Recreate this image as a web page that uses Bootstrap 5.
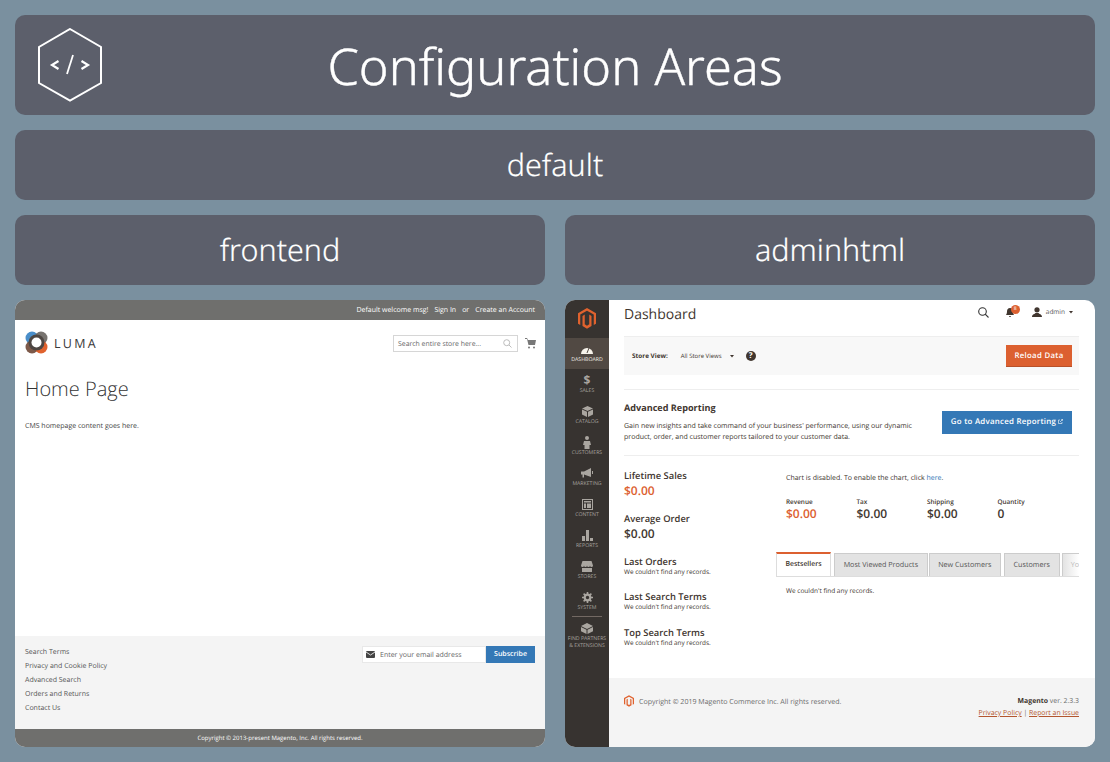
<!doctype html>
<html lang="en">
  <head>
    <meta charset="UTF-8">
    <meta name="viewport" content="width=device-width, initial-scale=1.0">
    <title>Configuration Areas</title>
    <link href="https://cdn.jsdelivr.net/npm/bootstrap@5.3.0/dist/css/bootstrap.min.css" rel="stylesheet">
    <style>
      body {
        background: #7a909f;
        font-family: "Open Sans", sans-serif;
        color: #41362f;
        height: 762px;
        overflow: hidden;
        text-rendering: geometricPrecision;
      }
      .page-wrap { padding: 15px; width: 1110px; }
      .slate-box {
        background: #5c5f6b;
        color: #fff;
        border-radius: 10px;
        font-family: "Noto Sans", sans-serif;
        font-weight: 300;
      }
      .title-box { height: 100px; font-size: 50.5px; margin-bottom: 15px; padding-top: 2px; -webkit-text-stroke: .4px #fff; }
      .title-box svg { position: absolute; left: 23px; top: 13px; }
      .area-box { height: 70px; font-size: 30.5px; margin-bottom: 15px; -webkit-text-stroke: .15px #fff; }
      .split-row { gap: 20px; }
      .split-row > div { width: 530px; }
      .shot { height: 447px; border-radius: 10px; overflow: hidden; background: #fff; }

      /* luma storefront */
      .luma-top { height: 20px; background: #6f6f6d; color: #fff; font-size: 7px; gap: 6px; padding: 2px 10px 0 0; }
      .luma-head { padding: 11px 9px 0 10px; height: 44px; }
      .luma-brand { font-size: 12.5px; letter-spacing: 2.3px; color: #3a3a3a; font-weight: 500; margin-left: -2px; }
      .luma-search { width: 125px; height: 17px; border: 1px solid #d6d6d6; font-size: 6.9px; color: #666; padding: 0 5px 0 4px; }
      .luma-search span { padding-top: 3px; }
      .cart-ico { margin: 2px 0 0 -1px; }
      .luma-body { padding: 0 10px; height: 272px; }
      .luma-body h1 { font-size: 20px; font-weight: 300; margin: 14px 0 21px; color: #333; line-height: 22px; }
      .luma-body p { font-size: 7px; margin: 0; color: #444; line-height: 12px; }
      .luma-foot { height: 93px; background: #f4f4f4; padding: 10px 10px 0; font-size: 7px; color: #555; }
      .luma-links div { height: 14px; line-height: 14px; }
      .sub-form { height: 17px; }
      .sub-field { width: 124px; background: #fff; border: 1px solid #e8e8e8; color: #666; padding-left: 3px; gap: 5px; }
      .sub-field span { padding-top: 3px; }
      .sub-btn { width: 49px; background: #3478b6; color: #fff; font-weight: 600; padding-top: 2px; }
      .luma-copy { height: 18px; background: #6f6f6d; color: #fff; font-size: 6px; padding-top: 1px; }

      /* admin */
      .admin-side { width: 44px; background: #373330; color: #aaa6a0; font-size: 5.2px; text-transform: uppercase; text-align: center; line-height: 7px; flex-shrink: 0; }
      .side-logo { height: 38px; padding-bottom: 2px; }
      .side-item { height: 31px; padding-top: 4px; }
      .side-icon { height: 14px; }
      .side-dollar { font-size: 12px; font-weight: 700; line-height: 14px; }
      .side-item.is-on { background: #514943; color: #f7f3eb; height: 31px; }
      .side-rule { border-top: 1px solid #736963; margin: -1px 7px 0; }
      .admin-main { width: 486px; }
      .admin-inner { padding: 0 16px 0 15px; height: 378px; }
      .admin-bar { height: 36px; padding: 0 6px 6px 0; }
      .admin-bar h2 { font-size: 14px; font-weight: 400; margin: 0; color: #41362f; }
      .admin-tools { font-size: 6.5px; color: #555; margin-bottom: 6px; }
      .bell-wrap { margin-left: 17px; }
      .user-ico { margin-left: 18px; }
      .bell-badge { position: absolute; top: -3px; right: -6px; width: 9px; height: 9px; border-radius: 50%; background: #dc6030; color: #fff; font-size: 5px; line-height: 9px; text-align: center; }
      .store-bar { height: 39px; background: #f8f8f8; border-top: 1px solid #eee; padding: 0 7px 0 8px; font-size: 6.4px; }
      .store-pick { font-size: 6px; margin-left: 13px; }
      .help-dot { width: 10px; height: 10px; border-radius: 50%; background: #41362f; color: #fff; font-size: 8px; font-weight: 700; line-height: 10px; text-align: center; margin-left: 12px; }
      .reload-btn { width: 66px; height: 22px; background: #dc6030; color: #fff; font-size: 7.8px; font-weight: 600; letter-spacing: .3px; border-bottom: 1px solid #b8512a; padding-top: 2px; }
      .report-row { height: 67px; margin-top: 14px; border-top: 1px solid #eee; border-bottom: 1px solid #eee; padding-right: 7px; }
      .report-row h3 { font-size: 9.1px; font-weight: 700; margin: 0 0 7px; color: #41362f; line-height: 12px; }
      .report-row p { font-size: 7.03px; line-height: 11.5px; margin: 0; width: 300px; color: #41362f; }
      .report-btn { width: 130px; height: 23px; background: #3478b6; color: #fff; font-size: 7.9px; font-weight: 600; letter-spacing: .25px; gap: 2px; padding-top: 1px; }
      .stats-col { width: 152px; padding-top: 14px; }
      .stat-label { font-size: 9.4px; font-weight: 600; line-height: 12px; color: #41362f; }
      .stat-val { font-size: 12px; font-weight: 600; line-height: 16px; color: #41362f; padding-top: 1px; height: 16px; }
      .is-hot { color: #dc6030 !important; }
      .stat-note { font-size: 6.4px; line-height: 8px; color: #41362f; }
      .gap-15 { margin-top: 15px; }
      .gap-16 { margin-top: 16px; }
      .chart-col { width: 303px; padding-top: 17px; }
      .chart-msg { font-size: 7px; line-height: 12px; padding-left: 10px; margin: 0; }
      .here-link { color: #3478b6; }
      .totals { padding: 12px 0 0 10px; height: 67px; }
      .totals > div { width: 70.5px; }
      .totals .tot-k { font-size: 6.4px; font-weight: 600; line-height: 9px; }
      .totals .tot-v { font-size: 12px; font-weight: 600; line-height: 16px; }
      .tab-row { height: 25px; border-bottom: 1px solid #ddd; gap: 2px; overflow: hidden; font-size: 7.2px; }
      .tab-cell { background: #e3e3e3; border: 1px solid #ccc; border-bottom: 0; margin-top: 1px; color: #555; }
      .tab-cell.is-on { background: #fff; border-top: 2px solid #dc6030; border-left: 1px solid #ddd; border-right: 1px solid #ddd; margin-top: 0; width: 55px; color: #41362f; font-weight: 600; font-size: 6.9px; }
      .tab-cell.is-fade { background: linear-gradient(to right, #e3e3e3, #fff); border-right: 0; color: #bbb; flex: 1; padding-left: 8px; }
      .tab-w1 { width: 94px; margin-left: 1px; }
      .tab-w2 { width: 72px; margin-left: -1px; }
      .tab-w3 { width: 56px; margin-left: 1px; }
      .tab-note { font-size: 6.5px; padding: 9px 0 0 10px; line-height: 9px; margin: 0; }
      .admin-foot { height: 69px; background: #f4f4f4; padding: 18px 16px 0 15px; font-size: 6.9px; color: #6a6a6a; line-height: 12px; }
      .admin-foot a { color: #b3562f; }
      .admin-foot b { color: #41362f; }
      .foot-logo { margin-top: -1px; margin-right: 1px; }
      .foot-copy { font-size: 7.05px; }
    </style>
  </head>
  <body>
    <div class="page-wrap">
      <div class="slate-box title-box position-relative d-flex align-items-center justify-content-center">
        <svg width="66" height="74" viewBox="0 0 66 74" fill="none" stroke="#fff">
          <polygon points="32,1 63,19 63,55 32,72.5 1,55 1,19" stroke-width="2"/>
          <polyline points="20.5,33 14,37 20.5,41" stroke-width="2.2"/>
          <line x1="35" y1="27" x2="29" y2="46" stroke-width="1.8"/>
          <polyline points="43.5,33 50,37 43.5,41" stroke-width="2.2"/>
        </svg>
        Configuration Areas
      </div>
      <div class="slate-box area-box d-flex align-items-center justify-content-center">default</div>
      <div class="d-flex split-row">
        <div class="slate-box area-box d-flex align-items-center justify-content-center">frontend</div>
        <div class="slate-box area-box d-flex align-items-center justify-content-center">adminhtml</div>
      </div>
      <div class="d-flex split-row">

        <!-- Luma -->
        <div class="shot d-flex flex-column">
          <div class="luma-top d-flex align-items-center justify-content-end">
            <span>Default welcome msg!</span><span>Sign In</span><span>or</span><span>Create an Account</span>
          </div>
          <div class="luma-head d-flex justify-content-between">
            <div class="d-flex align-items-start gap-2">
              <svg width="23" height="23" viewBox="0 0 23 23">
                <circle cx="7" cy="7" r="6.5" fill="#4a8ec9"/>
                <circle cx="16" cy="7" r="6.5" fill="#77736f"/>
                <circle cx="7" cy="16" r="6.5" fill="#7d5a4a"/>
                <circle cx="16" cy="16" r="6.5" fill="#e0622e"/>
                <circle cx="11.5" cy="11.5" r="8" fill="#4d4642"/>
                <circle cx="11.5" cy="11.5" r="5" fill="#fff"/>
              </svg>
              <span class="luma-brand mt-1">LUMA</span>
            </div>
            <div class="d-flex align-items-start gap-2 pt-1">
              <div class="luma-search d-flex align-items-center justify-content-between">
                <span>Search entire store here...</span>
                <svg width="9" height="9" viewBox="0 0 9 9" fill="none" stroke="#bbb"><circle cx="3.7" cy="3.7" r="3"/><line x1="6" y1="6" x2="8.5" y2="8.5"/></svg>
              </div>
              <svg class="cart-ico" width="11" height="12" viewBox="0 0 11 12" fill="#777"><path d="M0 1h2l1 2h8l-1 5H3.500L2 2H0z"/><circle cx="4" cy="10.500" r="1"/><circle cx="9" cy="10.500" r="1"/></svg>
            </div>
          </div>
          <div class="luma-body">
            <h1>Home Page</h1>
            <p>CMS homepage content goes here.</p>
          </div>
          <div class="luma-foot d-flex justify-content-between">
            <div class="luma-links">
              <div>Search Terms</div>
              <div>Privacy and Cookie Policy</div>
              <div>Advanced Search</div>
              <div>Orders and Returns</div>
              <div>Contact Us</div>
            </div>
            <div class="sub-form d-flex">
              <div class="sub-field d-flex align-items-center">
                <svg width="9" height="7" viewBox="0 0 9 7"><rect width="9" height="7" rx="1" fill="#444"/><path d="M0 1l4.500 3L9 1" fill="none" stroke="#fff" stroke-width=".8"/></svg>
                <span>Enter your email address</span>
              </div>
              <div class="sub-btn d-flex align-items-center justify-content-center">Subscribe</div>
            </div>
          </div>
          <div class="luma-copy d-flex align-items-center justify-content-center">Copyright © 2013-present Magento, Inc. All rights reserved.</div>
        </div>

        <!-- Admin -->
        <div class="shot d-flex">
          <div class="admin-side">
            <div class="side-logo d-flex align-items-center justify-content-center">
              <svg width="18" height="21" viewBox="0 0 24 28" fill="#e0622e"><path d="M12 0l12 7v14l-3 1.700V8.700L12 3.500 3 8.700v14L0 21V7z"/><path d="M6 10.500l3-1.700v13l3 1.700 3-1.700v-13l3 1.700V24l-6 3.500L6 24z"/></svg>
            </div>
            <div class="side-item is-on">
              <div class="side-icon d-flex align-items-center justify-content-center"><svg width="12" height="9" viewBox="0 0 12 9" fill="#f7f3eb"><path d="M0 9a6 6 0 1 1 12 0z"/><line x1="6" y1="8" x2="8" y2="3" stroke="#514943"/></svg></div>
              Dashboard
            </div>
            <div class="side-item">
              <div class="side-icon side-dollar">$</div>
              Sales
            </div>
            <div class="side-item">
              <div class="side-icon d-flex align-items-center justify-content-center"><svg width="11" height="11" viewBox="0 0 11 11" fill="#aaa6a0"><path d="M5.500 0L11 2.500 5.500 5 0 2.500zM0 3.500l5 2.300V11L0 8.500zM11 3.500L6 5.800V11l5-2.500z"/></svg></div>
              Catalog
            </div>
            <div class="side-item">
              <div class="side-icon d-flex align-items-center justify-content-center"><svg width="8" height="13" viewBox="0 0 8 13" fill="#aaa6a0"><circle cx="4" cy="2" r="2"/><path d="M1 5h6l1 4H6.500v4h-5V9H0z"/></svg></div>
              Customers
            </div>
            <div class="side-item">
              <div class="side-icon d-flex align-items-center justify-content-center"><svg width="12" height="10" viewBox="0 0 12 10" fill="#aaa6a0"><path d="M0 3.500h3L10 0v9L3 6.500v3H1.500v-3H0zM11 3h1v3h-1z"/></svg></div>
              Marketing
            </div>
            <div class="side-item">
              <div class="side-icon d-flex align-items-center justify-content-center"><svg width="11" height="11" viewBox="0 0 11 11" fill="#aaa6a0"><path d="M0 0h11v11H0zM1 1v9h9V1zM2 2h7v1.500H2zM2 4.500h2V9H2zM5 4.500h4V9H5z" fill-rule="evenodd"/></svg></div>
              Content
            </div>
            <div class="side-item">
              <div class="side-icon d-flex align-items-center justify-content-center"><svg width="11" height="11" viewBox="0 0 11 11" fill="#aaa6a0"><path d="M0 6h3v5H0zM4 0h3v11H4zM8 8h3v3H8z"/></svg></div>
              Reports
            </div>
            <div class="side-item">
              <div class="side-icon d-flex align-items-center justify-content-center"><svg width="12" height="11" viewBox="0 0 12 11" fill="#aaa6a0"><path d="M1.500 0h9L12 4.500a1.500 1.500 0 0 1-3 0 1.500 1.500 0 0 1-3 0 1.500 1.500 0 0 1-3 0 1.500 1.500 0 0 1-3 0zM1 7h10v4H1z"/></svg></div>
              Stores
            </div>
            <div class="side-item">
              <div class="side-icon d-flex align-items-center justify-content-center"><svg width="11" height="11" viewBox="0 0 11 11" fill="none" stroke="#aaa6a0"><circle cx="5.500" cy="5.500" r="2.800" stroke-width="2.200"/><path d="M5.500 0v2M5.500 9v2M0 5.500h2M9 5.500h2M1.600 1.600l1.400 1.400M8 8l1.400 1.400M1.600 9.400L3 8M8 3l1.400-1.400" stroke-width="1.600"/></svg></div>
              System
            </div>
            <div class="side-rule"></div>
            <div class="side-item">
              <div class="side-icon d-flex align-items-center justify-content-center"><svg width="12" height="11" viewBox="0 0 12 11" fill="#aaa6a0"><path d="M6 0l6 3-6 3-6-3zM0 4l5.500 2.700V11L0 8.300zM12 4L6.500 6.700V11L12 8.300z"/></svg></div>
              Find Partners<br>&amp; Extensions
            </div>
          </div>
          <div class="admin-main d-flex flex-column">
            <div class="admin-inner">
              <div class="admin-bar d-flex align-items-center justify-content-between">
                <h2>Dashboard</h2>
                <div class="admin-tools d-flex align-items-center">
                  <svg width="11" height="11" viewBox="0 0 11 11" fill="none" stroke="#333" stroke-width="1.100"><circle cx="4.500" cy="4.500" r="3.800"/><line x1="7.200" y1="7.200" x2="10.500" y2="10.500"/></svg>
                  <span class="bell-wrap position-relative d-inline-flex">
                    <svg width="8" height="9" viewBox="0 0 8 9" fill="#41362f"><path d="M4 0c2 0 3 1.500 3 3.500S8 7 8 7H0s1-1.500 1-3.500S2 0 4 0zM3 8h2a1 1 0 0 1-2 0z"/></svg>
                    <span class="bell-badge">8</span>
                  </span>
                  <svg class="user-ico" width="10" height="10" viewBox="0 0 10 10" fill="#41362f"><circle cx="5" cy="2.800" r="2.600"/><path d="M0 10c0-3 3-3 3.500-4h3C7 7 10 7 10 10z"/></svg>
                  <span class="ms-1">admin</span>
                  <svg class="ms-1" width="4" height="3" viewBox="0 0 4 3" fill="#41362f"><path d="M0 0h4L2 2.500z"/></svg>
                </div>
              </div>
              <div class="store-bar d-flex align-items-center">
                <b>Store View:</b>
                <span class="store-pick">All Store Views</span>
                <svg class="ms-2" width="4" height="3" viewBox="0 0 4 3" fill="#41362f"><path d="M0 0h4L2 2.500z"/></svg>
                <span class="help-dot">?</span>
                <div class="reload-btn d-flex align-items-center justify-content-center ms-auto">Reload Data</div>
              </div>
              <div class="report-row d-flex align-items-center justify-content-between">
                <div>
                  <h3>Advanced Reporting</h3>
                  <p>Gain new insights and take command of your business' performance, using our dynamic product, order, and customer reports tailored to your customer data.</p>
                </div>
                <div class="report-btn d-flex align-items-center justify-content-center">
                  Go to Advanced Reporting
                  <svg class="mb-1" width="5" height="5" viewBox="0 0 5 5" fill="none" stroke="#fff" stroke-width=".6"><path d="M2 1H.500v3.500H4V3M2 3l2.500-2.500M3 .300h1.700V2"/></svg>
                </div>
              </div>
              <div class="d-flex">
                <div class="stats-col">
                  <div class="stat-label">Lifetime Sales</div>
                  <div class="stat-val is-hot">$0.00</div>
                  <div class="stat-label gap-15">Average Order</div>
                  <div class="stat-val">$0.00</div>
                  <div class="stat-label gap-15">Last Orders</div>
                  <div class="stat-note">We couldn't find any records.</div>
                  <div class="stat-label gap-15">Last Search Terms</div>
                  <div class="stat-note">We couldn't find any records.</div>
                  <div class="stat-label gap-16">Top Search Terms</div>
                  <div class="stat-note">We couldn't find any records.</div>
                </div>
                <div class="chart-col">
                  <p class="chart-msg">Chart is disabled. To enable the chart, click <span class="here-link">here</span>.</p>
                  <div class="totals d-flex">
                    <div><div class="tot-k">Revenue</div><div class="tot-v is-hot">$0.00</div></div>
                    <div><div class="tot-k">Tax</div><div class="tot-v">$0.00</div></div>
                    <div><div class="tot-k">Shipping</div><div class="tot-v">$0.00</div></div>
                    <div><div class="tot-k">Quantity</div><div class="tot-v">0</div></div>
                  </div>
                  <div class="tab-row d-flex">
                    <div class="tab-cell is-on d-flex align-items-center justify-content-center">Bestsellers</div>
                    <div class="tab-cell tab-w1 d-flex align-items-center justify-content-center">Most Viewed Products</div>
                    <div class="tab-cell tab-w2 d-flex align-items-center justify-content-center">New Customers</div>
                    <div class="tab-cell tab-w3 d-flex align-items-center justify-content-center">Customers</div>
                    <div class="tab-cell is-fade d-flex align-items-center">Yo</div>
                  </div>
                  <p class="tab-note">We couldn't find any records.</p>
                </div>
              </div>
            </div>
            <div class="admin-foot d-flex justify-content-between">
              <div class="d-flex align-items-start gap-1">
                <svg class="foot-logo" width="10" height="12" viewBox="0 0 24 28" fill="#e0622e"><path d="M12 0l12 7v14l-3 1.700V8.700L12 3.500 3 8.700v14L0 21V7z"/><path d="M6 10.500l3-1.700v13l3 1.700 3-1.700v-13l3 1.700V24l-6 3.500L6 24z"/></svg>
                <span class="foot-copy">Copyright © 2019 Magento Commerce Inc. All rights reserved.</span>
              </div>
              <div class="text-end">
                <div><b>Magento</b> ver. 2.3.3</div>
                <div><a href="#">Privacy Policy</a> | <a href="#">Report an Issue</a></div>
              </div>
            </div>
          </div>
        </div>
      </div>
    </div>
    <script src="https://cdn.jsdelivr.net/npm/bootstrap@5.3.0/dist/js/bootstrap.bundle.min.js"></script>
  </body>
</html>
